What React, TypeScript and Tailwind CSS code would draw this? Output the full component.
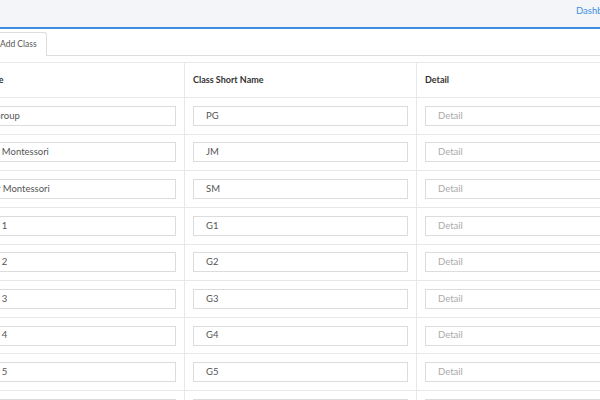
import React from "react";

const rows = [
  ["Play Group", "PG"],
  ["Junior Montessori", "JM"],
  ["Senior Montessori", "SM"],
  ["Grade 1", "G1"],
  ["Grade 2", "G2"],
  ["Grade 3", "G3"],
  ["Grade 4", "G4"],
  ["Grade 5", "G5"],
  ["Grade 6", "G6"],
];

export default function App() {
  return (
    <div
      className="w-[600px] h-[400px] overflow-hidden bg-white"
      style={{ fontFamily: "Lato, 'Open Sans', sans-serif" }}
    >
      <div className="h-[29px] bg-[#f4f5f8] border-b-2 border-[#3b8ee0] flex items-start justify-end">
        <span className="text-[9.5px] text-[#3b8ee0] mt-[4px] mr-[-24px] w-[48px]">Dashboard</span>
      </div>
      <div className="ml-[-47px] w-[760px]">
        <div className="mt-[3px] border-b border-[#dddddd] flex pl-[37px]">
          <div className="h-[24px] border border-b-0 border-[#dddddd] rounded-t-[3px] bg-white px-[9px] flex items-center text-[8.5px] text-[#555] mb-[-1px]">
            Add Class
          </div>
        </div>
        <div className="mt-[6px] border-t border-[#e8e8e8]">
          <div className="flex h-[35px] border-b border-[#e8e8e8] text-[9px] font-bold text-[#333]">
            <div className="w-[232px] pl-[4px] pr-[8px] flex items-center border-r border-[#e8e8e8]">Class Name</div>
            <div className="w-[232px] px-[8px] flex items-center border-r border-[#e8e8e8]">Class Short Name</div>
            <div className="flex-1 px-[8px] flex items-center">Detail</div>
          </div>
          {rows.map(([name, short]) => (
            <div key={short} className="flex h-[36.625px] border-b border-[#e8e8e8] text-[9.5px]">
              <div className="w-[232px] px-[8px] flex items-center border-r border-[#e8e8e8]">
                <div className="w-full h-[20px] border border-[#dcdcdc] px-[12px] flex items-center text-[#555]">{name}</div>
              </div>
              <div className="w-[232px] px-[8px] flex items-center border-r border-[#e8e8e8]">
                <div className="w-full h-[20px] border border-[#dcdcdc] px-[12px] flex items-center text-[#555]">{short}</div>
              </div>
              <div className="flex-1 px-[8px] flex items-center">
                <div className="w-full h-[20px] border border-[#dcdcdc] px-[12px] flex items-center text-[#aaa]">Detail</div>
              </div>
            </div>
          ))}
        </div>
      </div>
    </div>
  );
}
